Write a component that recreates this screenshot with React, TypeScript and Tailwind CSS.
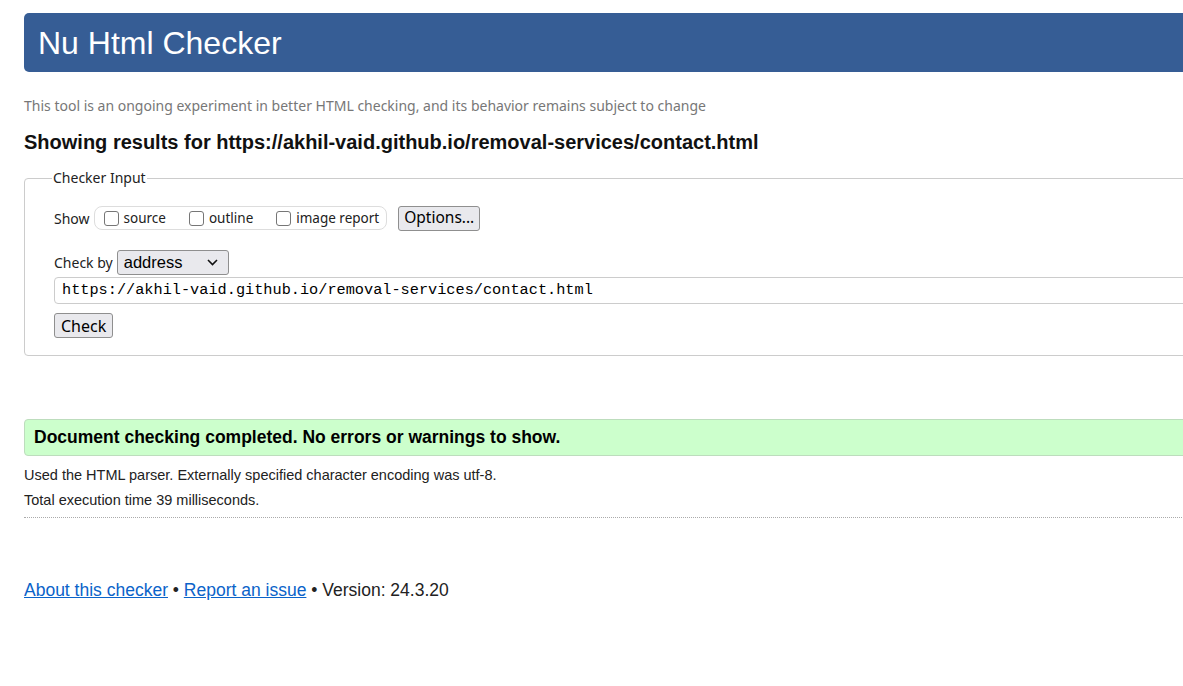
import React from 'react'

const segoe = "font-['Noto_Sans','Open_Sans',sans-serif]"
const arial = "font-['Liberation_Sans',Arial,sans-serif]"

function Box({ label }: { label: string }) {
  return (
    <label className="flex items-center gap-[5px]">
      <span className="w-[15px] h-[15px] border border-[#767676] rounded-[3px] bg-white" />
      <span>{label}</span>
    </label>
  )
}

export default function App() {
  return (
    <div className="w-[1183px] h-[686px] overflow-hidden bg-white">
      <div className="w-[1400px] pl-[24px] pt-[13px]">
        <header className="h-[59px] bg-[#365d95] rounded-[5px] flex items-center pl-[14px]">
          <h1 className={`${arial} text-white text-[32px] leading-none`}>Nu Html Checker</h1>
        </header>

        <p className={`${segoe} mt-[24px] text-[14px] text-[#777] leading-[19px]`}>
          This tool is an ongoing experiment in better HTML checking, and its behavior remains subject to change
        </p>

        <h2 className={`${arial} mt-[15px] text-[20px] font-bold text-[#111] leading-[24px]`}>
          Showing results for https://akhil-vaid.github.io/removal-services/contact.html
        </h2>

        <fieldset className={`${segoe} mt-[15px] border border-[#ccc] rounded-[4px] pl-[29px] pr-0 pb-[17px] text-[14px] text-[#222]`}>
          <legend className="px-[1px] -ml-[2px] text-[14px] leading-[18px]">Checker Input</legend>

          <div className="mt-[18px] flex items-center h-[26px]">
            <span>Show</span>
            <div className="ml-[4px] flex items-center gap-[23px] h-[24px] border border-[#ddd] rounded-[8px] pl-[9px] pr-[7px] text-[13.5px]">
              <Box label="source" />
              <Box label="outline" />
              <Box label="image report" />
            </div>
            <button className="ml-[11px] h-[25px] px-[5px] text-[15.5px] leading-none border border-[#8f8f8f] rounded-[3px] bg-[#e9e9ed] text-black">
              Options...
            </button>
          </div>

          <div className="mt-[19px] flex items-center h-[25px]">
            <span>Check by</span>
            <div className={`${arial} ml-[4px] w-[112px] h-[25px] border border-[#8f8f8f] rounded-[3px] bg-[#e9e9ed] flex items-center justify-between pl-[6px] pr-[10px] text-[16.5px] text-black`}>
              <span>address</span>
              <svg width="11" height="7" viewBox="0 0 11 7" fill="none">
                <path d="M1 1l4.5 4.5L10 1" stroke="#111" strokeWidth="1.6" />
              </svg>
            </div>
          </div>

          <div className="mt-[2px] h-[27px] border border-[#ccc] rounded-[4px] flex items-center pl-[7px] font-['Liberation_Mono',monospace] text-[15.25px] text-black">
            https://akhil-vaid.github.io/removal-services/contact.html
          </div>

          <button className="mt-[9px] h-[25px] px-[6px] text-[16px] leading-none border border-[#8f8f8f] rounded-[3px] bg-[#e9e9ed] text-black">
            Check
          </button>
        </fieldset>

        <div className={`${arial} mt-[63px] h-[37px] bg-[#ccffcc] border border-[#bdddbd] rounded-[4px] flex items-center pl-[9px] text-[17.5px] font-bold text-black`}>
          Document checking completed. No errors or warnings to show.
        </div>

        <p className={`${arial} mt-[11px] text-[14.5px] text-[#222] leading-[16px]`}>
          Used the HTML parser. Externally specified character encoding was utf-8.
        </p>
        <p className={`${arial} mt-[9px] text-[14.5px] text-[#222] leading-[16px]`}>
          Total execution time 39 milliseconds.
        </p>
        <div className="mt-[9px] border-t border-dotted border-[#aaa]" />

        <p className={`${arial} mt-[61px] text-[17.5px] text-[#222] leading-[22px]`}>
          <a href="#" className="text-[#0b63c9] underline">About this checker</a>
          {' • '}
          <a href="#" className="text-[#0b63c9] underline">Report an issue</a>
          {' • Version: 24.3.20'}
        </p>
      </div>
    </div>
  )
}
